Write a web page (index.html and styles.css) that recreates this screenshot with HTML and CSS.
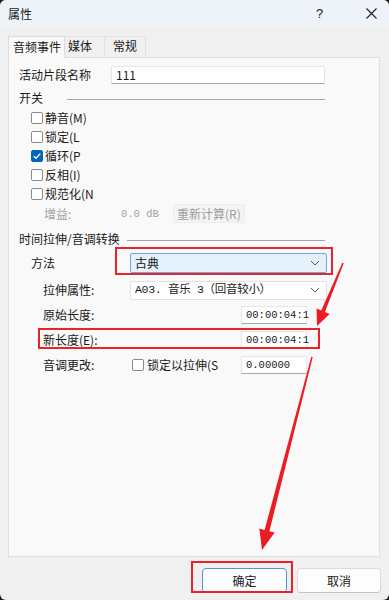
FILE: index.html
```html
<!DOCTYPE html>
<html lang="zh-CN">
<head>
<meta charset="utf-8">
<title>属性</title>
<link rel="stylesheet" href="styles.css">
</head>
<body>
<div class="window">
  <div class="titlebar">
    <span class="title">属性</span>
    <span class="help">?</span>
    <span class="close"><svg width="11" height="11" viewBox="0 0 11 11"><path d="M0.5 0.5 L10.5 10.5 M10.5 0.5 L0.5 10.5" stroke="#1f1f1f" stroke-width="1.1" fill="none"/></svg></span>
  </div>
  <div class="tabs">
    <div class="tab active">音频事件</div>
    <div class="tab tab-media">媒体</div>
    <div class="tab tab-general">常规</div>
  </div>
  <div class="panel">
    <div class="row name-row">
      <span class="lbl lbl-name">活动片段名称</span>
      <div class="field name-field">111</div>
    </div>
    <div class="group-head head-switch"><span class="head-text">开关</span><span class="rule"></span></div>
    <div class="checks">
      <div class="check"><span class="box"></span><span class="ctext">静音(M)</span></div>
      <div class="check"><span class="box"></span><span class="ctext">锁定(L</span></div>
      <div class="check"><span class="box checked"><svg width="10" height="10" viewBox="0 0 10 10"><path d="M1.8 5.2 L4 7.3 L8.3 2.6" stroke="#fff" stroke-width="1.3" fill="none"/></svg></span><span class="ctext">循环(P</span></div>
      <div class="check"><span class="box"></span><span class="ctext">反相(I)</span></div>
      <div class="check"><span class="box"></span><span class="ctext">规范化(N</span></div>
    </div>
    <div class="gain-row">
      <span class="gain-lbl">增益:</span>
      <span class="gain-val">0.0 dB</span>
      <span class="recalc">重新计算(R)</span>
    </div>
    <div class="group-head head-stretch"><span class="head-text">时间拉伸/音调转换</span><span class="rule"></span></div>
    <div class="row method-row">
      <span class="lbl lbl-method">方法</span>
      <div class="select focused"><span class="sel-text">古典</span><svg class="chev" width="10" height="6" viewBox="0 0 10 6"><path d="M1 1 L5 5 L9 1" stroke="#555" stroke-width="1" fill="none"/></svg></div>
    </div>
    <div class="row sub-row prop-row">
      <span class="lbl lbl-sub">拉伸属性:</span>
      <div class="select"><span class="sel-text serif">A03. 音乐 3（回音较小）</span><svg class="chev" width="10" height="6" viewBox="0 0 10 6"><path d="M1 1 L5 5 L9 1" stroke="#555" stroke-width="1" fill="none"/></svg></div>
    </div>
    <div class="row sub-row len-row">
      <span class="lbl lbl-len">原始长度:</span>
      <div class="field num-field">00:00:04:1</div>
    </div>
    <div class="row sub-row len-row">
      <span class="lbl lbl-len">新长度(E):</span>
      <div class="field num-field">00:00:04:1</div>
    </div>
    <div class="row sub-row len-row">
      <span class="lbl lbl-pitch">音调更改:</span>
      <span class="box pitch-box"></span>
      <span class="pitch-text">锁定以拉伸(S</span>
      <div class="field num-field">0.00000</div>
    </div>
  </div>
  <div class="footer">
    <div class="btn primary">确定</div>
    <div class="btn">取消</div>
  </div>

  <div class="mark mark-method"></div>
  <div class="mark mark-newlen"></div>
  <div class="mark mark-ok"></div>
  <svg class="arrows" width="389" height="600" viewBox="0 0 389 600">
    <polygon fill="#ec1c24" points="343.7,263.3 342.3,262.7 321.25,310.44 316.6,308.5 317,326 329.6,313.9 324.95,311.96"/>
    <polygon fill="#ec1c24" points="312.7,357.2 311.3,356.8 264.6,530.0 259.3,528.6 262,550 274.7,532.6 269.4,531.2"/>
  </svg>
</div>
</body>
</html>
```

FILE: styles.css
```css
* { box-sizing: border-box; }
html, body {
  margin: 0;
  padding: 0;
  background: #1c1c1c;
}
body {
  width: 389px;
  height: 600px;
  overflow: hidden;
  font-family: "Noto Sans CJK SC", "Noto Sans", sans-serif;
  font-size: 12px;
  color: #1a1a1a;
}
.window {
  position: relative;
  width: 389px;
  height: 600px;
  background: #f0f0f0;
  border-radius: 6px;
  overflow: hidden;
  display: flex;
  flex-direction: column;
}
.titlebar {
  height: 27px;
  background: #eef3f9;
  display: flex;
  align-items: center;
  padding-left: 8px;
  flex: none;
}
.title {
  font-size: 12px;
  line-height: 16px;
}
.help {
  margin-left: auto;
  font-family: "Liberation Sans", sans-serif;
  font-size: 13px;
  width: 10px;
  margin-right: 40px;
}
.close {
  width: 11px;
  height: 11px;
  margin-right: 12px;
  display: flex;
}
.tabs {
  display: flex;
  align-items: flex-end;
  padding-left: 8px;
  margin-top: 9px;
  height: 21px;
  flex: none;
  position: relative;
  z-index: 2;
}
.tab {
  height: 20px;
  line-height: 18px;
  border: 1px solid #e2e2e2;
  border-bottom: none;
  background: #f0f0f0;
  font-size: 12px;
  margin-bottom: 1px;
  white-space: nowrap;
}
.tab.active {
  width: 57px;
  height: 22px;
  line-height: 20px;
  background: #f9f9f9;
  border-color: #dcdcdc;
  margin-bottom: -1px;
  padding: 0 0 0 4px;
}
.tab-media { width: 40px; border-left: none; padding-left: 3px; }
.tab-general { width: 41px; border-left: none; padding-left: 8px; }
.panel {
  margin-left: 8px;
  width: 372px;
  height: 500px;
  background: #f9f9f9;
  border: 1px solid #e0e0e0;
  padding: 8px 0 0 10px;
  flex: none;
  display: flex;
  flex-direction: column;
}
.row {
  display: flex;
  align-items: center;
}
.lbl {
  flex: none;
  line-height: 16px;
}
.name-row { height: 18px; }
.lbl-name { width: 92px; }
.field {
  background: #fff;
  border: 1px solid #e6e6e6;
  border-bottom-color: #a8a8a8;
  height: 18px;
  line-height: 16px;
  padding-left: 4px;
  font-family: "Liberation Mono", "DejaVu Sans Mono", monospace;
  font-size: 10.5px;
  color: #1a1a1a;
}
.name-field {
  width: 214px;
  font-family: "Noto Sans CJK SC", sans-serif;
  font-size: 12px;
}
.group-head {
  display: flex;
  align-items: center;
  height: 18px;
  width: 306px;
}
.head-switch { margin-top: 5px; }
.head-stretch { margin-top: 7px; }
.head-text { flex: none; line-height: 16px; }
.rule {
  flex: 1;
  height: 1px;
  background: #a5a5a5;
  margin-left: 24px;
  margin-top: 2px;
}
.head-stretch .rule { margin-left: 7px; }
.checks {
  display: flex;
  flex-direction: column;
  margin-top: 1px;
  padding-left: 12px;
}
.check {
  height: 19px;
  display: flex;
  align-items: center;
}
.box {
  flex: none;
  width: 12px;
  height: 12px;
  border: 1px solid #8a8a8a;
  border-radius: 2px;
  background: #fff;
  display: flex;
  align-items: center;
  justify-content: center;
}
.box.checked {
  background: #0067c0;
  border-color: #0067c0;
}
.ctext {
  margin-left: 2px;
  line-height: 16px;
}
.gain-row {
  display: flex;
  align-items: center;
  height: 19px;
  margin-top: 1px;
  padding-left: 25px;
  color: #a3a3a3;
}
.gain-lbl { width: 77px; }
.gain-val {
  width: 52px;
  font-family: "Liberation Mono", monospace;
  font-size: 10.5px;
}
.recalc {
  height: 19px;
  line-height: 17px;
  padding: 0 3px;
  background: #f4f4f4;
  border: 1px solid #ececec;
  border-radius: 3px;
  color: #9c9c9c;
}
.method-row {
  height: 20px;
  margin-top: 5px;
  padding-left: 12px;
}
.lbl-method { width: 99px; }
.select {
  width: 197px;
  height: 19px;
  display: flex;
  align-items: center;
  padding-left: 4px;
  background: #fff;
  border: 1px solid #e2e2e2;
  border-radius: 2px;
}
.select.focused {
  height: 20px;
  background: #e5f1fb;
  border-color: #6aa7e3;
}
.sel-text { flex: 1; line-height: 16px; }
.serif {
  font-family: "Liberation Mono", "Noto Sans CJK SC", monospace;
  font-size: 11.5px;
  letter-spacing: -0.3px;
}
.chev { flex: none; margin-right: 6px; }
.sub-row {
  height: 18px;
  margin-top: 8px;
  padding-left: 24px;
}
.len-row { margin-top: 7px; }
.lbl-sub { width: 87px; }
.lbl-len { width: 198px; }
.lbl-pitch { width: 89px; }
.num-field { width: 66px; }
.pitch-box { margin-right: 3px; }
.pitch-text { width: 94px; line-height: 16px; }
.footer {
  display: flex;
  justify-content: flex-end;
  gap: 10px;
  padding-right: 8px;
  margin-top: 11px;
}
.btn {
  width: 84px;
  height: 25px;
  line-height: 23px;
  text-align: center;
  background: #fdfdfd;
  border: 1px solid #dadada;
  border-bottom-color: #c4c4c4;
  border-radius: 4px;
}
.btn.primary {
  width: 85px;
  border: 1px solid #4f95d8;
  background: #fdfdfd;
}
.mark {
  position: absolute;
  border: 2px solid #e8232c;
  pointer-events: none;
}
.mark-method { left: 115px; top: 247px; width: 218px; height: 28px; }
.mark-newlen { left: 38px; top: 328px; width: 282px; height: 21px; }
.mark-ok { left: 191px; top: 561px; width: 102px; height: 32px; }
.arrows {
  position: absolute;
  left: 0;
  top: 0;
  pointer-events: none;
}
```
